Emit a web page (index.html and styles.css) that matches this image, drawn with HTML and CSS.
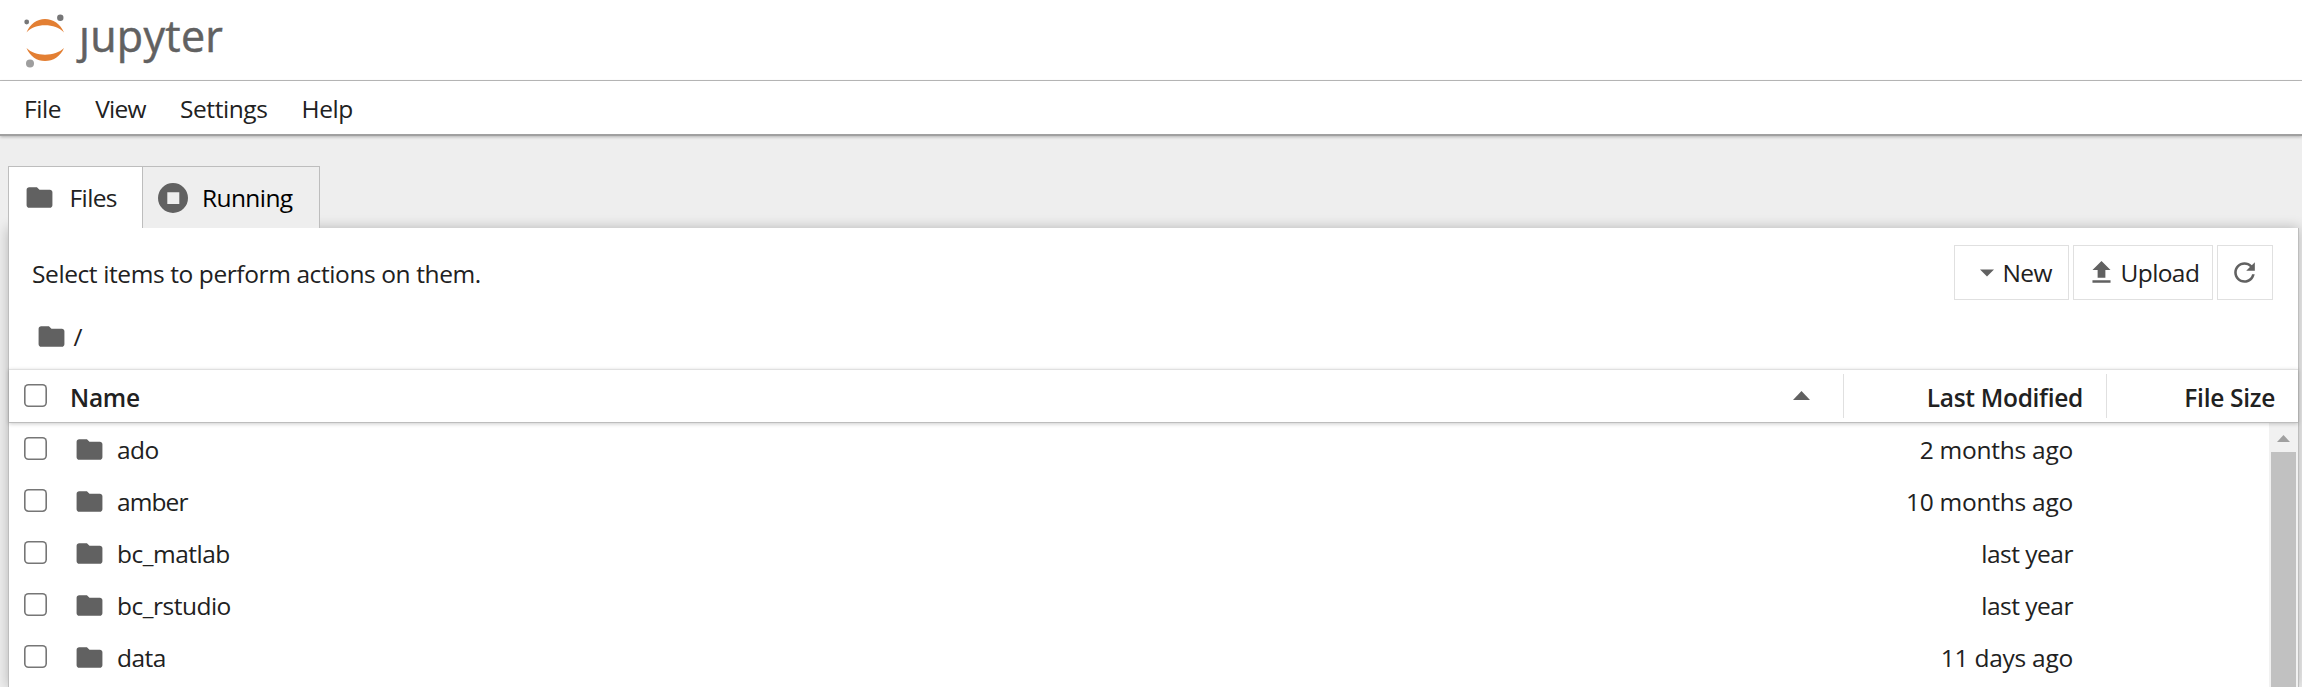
FILE: index.html
```html
<!DOCTYPE html>
<html lang="en">
<head>
<meta charset="utf-8">
<title>Home</title>
<link rel="stylesheet" href="styles.css">
</head>
<body>
<svg class="defs" width="0" height="0">
  <symbol id="folder" viewBox="0 0 24 24"><path d="M10 4H4c-1.100 0-1.990.9-1.990 2L2 18c0 1.100.9 2 2 2h16c1.100 0 2-.9 2-2V8c0-1.100-.9-2-2-2h-8l-2-2z"/></symbol>
</svg>
<header class="brand">
  <svg class="planet" width="42" height="54" viewBox="0 0 42 54">
    <path fill="#e37f33" d="M2.500 18.500C6 10 13 5 21 5s15.500 5 19 13.500C35.500 13.500 28.500 11.300 21 11.300S7 13.500 2.500 18.500z"/>
    <path fill="#e37f33" d="M2.500 34C6 42.500 13 47 21 47s15.500-4.500 19-13C35.500 38.500 28.500 40.700 21 40.700S7 38.500 2.500 34z"/>
    <circle fill="#767677" cx="2.700" cy="8" r="2.400"/>
    <circle fill="#767677" cx="36.300" cy="3.700" r="3.200"/>
    <circle fill="#9e9e9e" cx="6" cy="49.500" r="4"/>
  </svg>
  <span class="wordmark"><span class="j">j</span>upyter</span>
</header>
<nav class="menu">
  <span>File</span><span class="view">View</span><span>Settings</span><span>Help</span>
</nav>
<main class="main">
  <div class="tabs">
    <div class="tab active"><svg class="icon" width="31" height="31"><use href="#folder"/></svg><span>Files</span></div>
    <div class="tab running"><svg class="icon" width="30" height="30" viewBox="0 0 30 30"><path fill-rule="evenodd" d="M15 0a15 15 0 1 0 0 30a15 15 0 1 0 0-30zM9.300 9.200h12v11.800h-12z"/></svg><span>Running</span></div>
  </div>
  <section class="panel">
    <div class="toolbar">
      <span class="hint">Select items to perform actions on them.</span>
      <div class="buttons">
        <button class="btn new"><svg class="icon" width="14" height="8" viewBox="0 0 14 8"><path d="M0 .5h14L7 7.500z"/></svg><span>New</span></button>
        <button class="btn upload"><svg class="icon" width="31" height="31" viewBox="0 0 24 24"><path d="M5 20h14v-2H5v2zM5 10h4v6h6v-6h4l-7-7-7 7z"/></svg><span>Upload</span></button>
        <button class="btn refresh" aria-label="Refresh"><svg class="icon" width="31" height="31" viewBox="0 0 18 18"><path d="M9 13.500c-2.490 0-4.500-2.010-4.500-4.500S6.510 4.500 9 4.500c1.240 0 2.360.52 3.170 1.330L10 8h5V3l-1.760 1.760C12.150 3.680 10.660 3 9 3 5.690 3 3.010 5.690 3.010 9S5.690 15 9 15c2.970 0 5.430-2.160 5.900-5h-1.520c-.46 2-2.240 3.500-4.380 3.500z"/></svg></button>
      </div>
    </div>
    <div class="crumbs"><svg class="icon" width="31" height="31"><use href="#folder"/></svg><span>/</span></div>
    <div class="thead">
      <div class="th name"><i class="check"></i><span>Name</span><svg class="icon sort" width="17" height="9" viewBox="0 0 17 9"><path d="M0 9h17L8.500 0z"/></svg></div>
      <div class="th modified"><span>Last Modified</span></div>
      <div class="th size"><span>File Size</span></div>
    </div>
    <div class="listing">
      <div class="rows">
        <div class="row"><i class="check"></i><svg class="icon" width="31" height="31"><use href="#folder"/></svg><span>ado</span><span class="when months">2 months ago</span></div>
        <div class="row"><i class="check"></i><svg class="icon" width="31" height="31"><use href="#folder"/></svg><span class="amber">amber</span><span class="when months">10 months ago</span></div>
        <div class="row"><i class="check"></i><svg class="icon" width="31" height="31"><use href="#folder"/></svg><span>bc_matlab</span><span class="when">last year</span></div>
        <div class="row"><i class="check"></i><svg class="icon" width="31" height="31"><use href="#folder"/></svg><span>bc_rstudio</span><span class="when">last year</span></div>
        <div class="row"><i class="check"></i><svg class="icon" width="31" height="31"><use href="#folder"/></svg><span>data</span><span class="when months">11 days ago</span></div>
      </div>
      <div class="scrollbar"><svg width="13" height="7" viewBox="0 0 13 7"><path fill="#a0a0a0" d="M0 7h13L6.500 0z"/></svg><div class="thumb"></div></div>
    </div>
  </section>
</main>
</body>
</html>
```
FILE: styles.css
```css
* { box-sizing: border-box; }
body {
  margin: 0;
  height: 687px;
  overflow: hidden;
  display: flex;
  flex-direction: column;
  background: #eee;
  color: #212121;
  font: 24.5px/34px "Open Sans", "Noto Sans", sans-serif;
  letter-spacing: -0.4px;
}
.defs { display: none; }
.icon { fill: #616161; flex: none; display: block; }

.brand {
  flex: none;
  height: 81px;
  display: flex;
  align-items: flex-start;
  padding: 13.500px 0 0 23.500px;
  background: #fff;
  border-bottom: 1px solid #bdbdbd;
}
.planet { overflow: visible; }
.wordmark {
  margin: -8px 0 0 13.500px;
  font-size: 43px;
  line-height: 60px;
  letter-spacing: 0.3px;
  color: #616161;
  -webkit-text-stroke: 0.5px #616161;
}
/* The wordmark's j carries no dot. */
.j { display: inline-block; clip-path: inset(22px -6px -6px -10px); }

.menu {
  flex: none;
  height: 55px;
  display: flex;
  padding: 11px 24px 0;
  gap: 34px;
  background: #fff;
  border-bottom: 2px solid #a0a0a0;
  box-shadow: 0 1px 3px rgba(0, 0, 0, .25);
}
.view { letter-spacing: -0.7px; }

.main {
  flex: 1;
  min-height: 0;
  display: flex;
  flex-direction: column;
  padding: 30px 3px 0 8px;
}
.tabs { display: flex; flex: none; height: 62px; position: relative; z-index: 1; }
.tab {
  display: flex;
  align-items: center;
  border: 1px solid #bdbdbd;
  border-bottom: 0;
  background: #eee;
}
.tab.active { width: 134px; padding-left: 14.500px; gap: 15px; background: #fff; border-right: 0; letter-spacing: -0.6px; }
.tab.running { width: 178px; padding-left: 14.500px; gap: 14.500px; color: #000; letter-spacing: -0.6px; }

.panel {
  flex: 1;
  min-height: 0;
  display: flex;
  flex-direction: column;
  background: #fff;
  border: 1px solid #bdbdbd;
  border-width: 0 1px;
  box-shadow: 0 0 12px rgba(0, 0, 0, .24);
}
.toolbar { flex: none; height: 89px; display: flex; justify-content: space-between; padding: 17px 25px 17px 23px; }
.hint { padding-top: 12px; }
.buttons { display: flex; gap: 4px; }
.btn {
  display: flex;
  align-items: center;
  padding: 0;
  font: inherit;
  letter-spacing: -0.6px;
  color: inherit;
  background: #fff;
  border: 1px solid #e0e0e0;
}
.btn span { padding-top: 1px; }
.btn.new { width: 115px; padding: 0 0 0 24.500px; gap: 9px; }
.btn.upload { width: 140px; padding-left: 12px; gap: 3.500px; }
.btn.refresh { width: 56px; padding: 0 0 0 11px; }
.btn.refresh .icon { margin-top: -1px; }
.crumbs { flex: none; height: 52px; display: flex; gap: 7px; padding: 3px 0 0 26.500px; }
.crumbs .icon { margin-top: 1px; }

.thead {
  flex: none;
  height: 54px;
  display: flex;
  border-top: 1px solid #e0e0e0;
  border-bottom: 1px solid #bdbdbd;
  box-shadow: 0 1px 4px rgba(0, 0, 0, .2);
  font-weight: 600;
  letter-spacing: -0.3px;
  position: relative;
  z-index: 1;
}
.th { display: flex; padding-top: 7px; }
.th.name { flex: 1; padding-left: 15px; }
.th.name span { margin: 4px 0 0 23px; }
.sort { margin: 14px 33px 0 auto; }
.th.modified, .th.size { justify-content: flex-end; border-left: 1px solid #e0e0e0; margin: 4px 0 4px; padding-top: 7px; }
.th.modified { width: 263px; padding-right: 23px; }
.th.size { width: 192px; padding-right: 23px; }
.check { flex: none; width: 23px; height: 23px; margin-top: 7px; box-shadow: inset 0 0 0 1.600px #767676; border-radius: 4.500px; background: #fff; }

.listing { flex: 1; min-height: 0; display: flex; overflow: hidden; }
.rows { flex: 1; }
.row { height: 52px; display: flex; padding: 10px 196px 0 15px; letter-spacing: -0.5px; }
.row .check { margin: 4px 26.500px 0 0; }
.row .icon { margin: 1px 12.500px 0 0; }
.when { margin-left: auto; }
.months { letter-spacing: -0.250px; }
.amber { letter-spacing: -0.9px; }
.scrollbar { width: 29px; display: flex; flex-direction: column; padding: 12px 2px 0; background: #f1f1f1; }
.scrollbar svg { flex: none; display: block; margin: 0 auto 10px; }
.thumb { flex: 1; background: #c1c1c1; }
```
